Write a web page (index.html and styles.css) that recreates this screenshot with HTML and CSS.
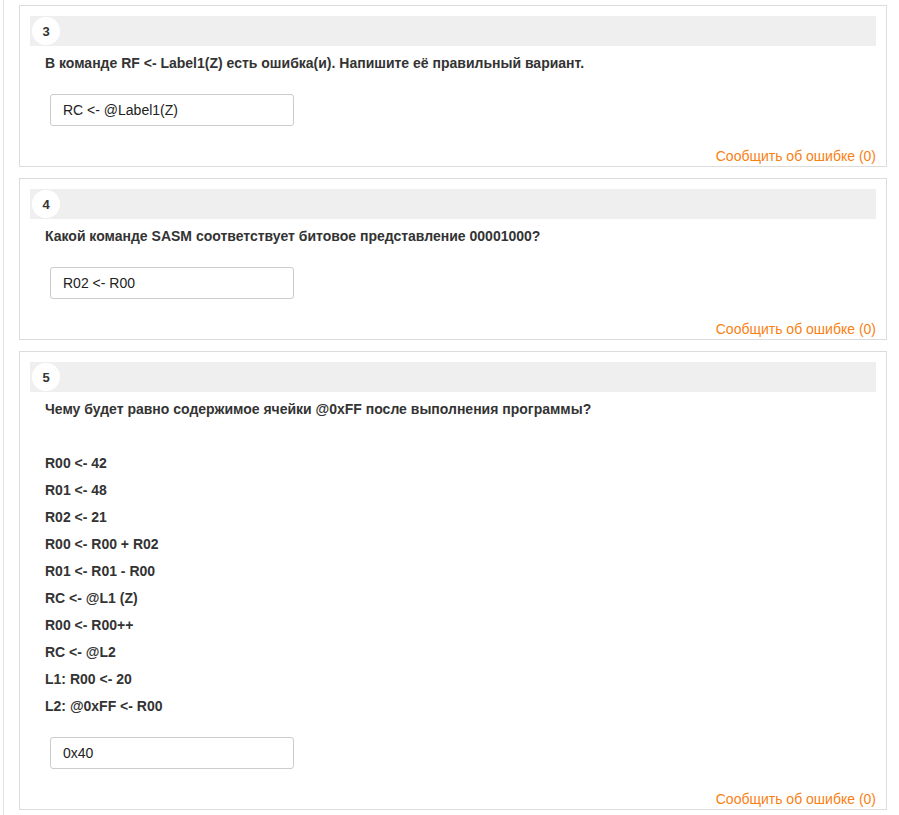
FILE: index.html
```html
<!DOCTYPE html>
<html lang="ru">
<head>
<meta charset="utf-8">
<title>Вопросы</title>
<link rel="stylesheet" href="styles.css">
</head>
<body>
<div class="page">
  <div class="card">
    <div class="card-head"><span class="num">3</span></div>
    <div class="question">В команде RF &lt;- Label1(Z) есть ошибка(и). Напишите её правильный вариант.</div>
    <div class="answer"><input class="field" type="text" value="RC <- @Label1(Z)"></div>
    <div class="report"><a href="#">Сообщить об ошибке (0)</a></div>
  </div>
  <div class="card">
    <div class="card-head"><span class="num">4</span></div>
    <div class="question">Какой команде SASM соответствует битовое представление 00001000?</div>
    <div class="answer"><input class="field" type="text" value="R02 <- R00"></div>
    <div class="report"><a href="#">Сообщить об ошибке (0)</a></div>
  </div>
  <div class="card">
    <div class="card-head"><span class="num">5</span></div>
    <div class="question">
      <div>Чему будет равно содержимое ячейки @0xFF после выполнения программы?</div>
      <div class="blank"></div>
      <div>R00 &lt;- 42</div>
      <div>R01 &lt;- 48</div>
      <div>R02 &lt;- 21</div>
      <div>R00 &lt;- R00 + R02</div>
      <div>R01 &lt;- R01 - R00</div>
      <div>RC &lt;- @L1 (Z)</div>
      <div>R00 &lt;- R00++</div>
      <div>RC &lt;- @L2</div>
      <div>L1: R00 &lt;- 20</div>
      <div>L2: @0xFF &lt;- R00</div>
    </div>
    <div class="answer"><input class="field" type="text" value="0x40"></div>
    <div class="report"><a href="#">Сообщить об ошибке (0)</a></div>
  </div>
</div>
</body>
</html>
```

FILE: styles.css
```css
html, body {
  margin: 0;
  padding: 0;
  background: #fff;
}
body {
  font-family: "Liberation Sans", Arial, sans-serif;
  font-size: 14px;
  color: #333;
}
.page {
  margin-left: 3px;
  border-left: 1px solid #e2e2e2;
  padding: 5px 12px 20px 15px;
  min-height: 815px;
  box-sizing: border-box;
}
.card {
  border: 1px solid #dcdcdc;
  padding: 10px 10px 0 10px;
  margin-bottom: 11px;
}
.card-head {
  height: 30px;
  background: #efefef;
  display: flex;
  align-items: center;
  padding-left: 2px;
}
.num {
  width: 28px;
  height: 28px;
  border-radius: 50%;
  background: #fff;
  display: flex;
  align-items: center;
  justify-content: center;
  font-weight: bold;
  font-size: 13px;
  color: #333;
}
.question {
  margin-top: 4px;
  padding-left: 15px;
  font-weight: bold;
  line-height: 27px;
  color: #333;
}
.blank {
  height: 27px;
}
.answer {
  margin-top: 17px;
  padding-left: 20px;
}
.field {
  box-sizing: border-box;
  width: 244px;
  height: 32px;
  border: 1px solid #ccc;
  border-radius: 3px;
  padding: 0 12px;
  font-family: "Liberation Sans", Arial, sans-serif;
  font-size: 14px;
  color: #222;
  background: #fff;
  outline: none;
}
.report {
  margin-top: 20px;
  text-align: right;
  line-height: 20px;
}
.report a {
  color: #f98012;
  text-decoration: none;
}
```
